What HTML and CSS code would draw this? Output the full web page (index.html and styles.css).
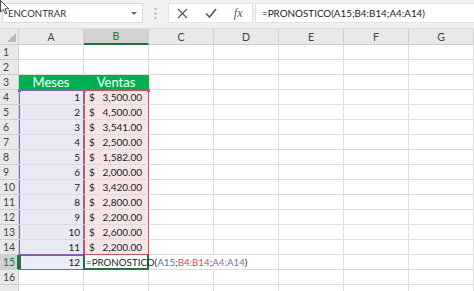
FILE: index.html
```html
<!DOCTYPE html>
<html lang="es">

<head>
    <meta charset="UTF-8">
    <title>PRONOSTICO</title>
    <link rel="stylesheet" href="styles.css">
</head>

<body>
    <div class="app">
        <!-- Barra de nombre y formula -->
        <div class="toolbar">
            <div class="namebox">
                <span>ENCONTRAR</span>
                <span class="caret"></span>
            </div>
            <div class="grip">
                <svg width="3" height="11" viewBox="0 0 3 11">
                    <rect x="0.5" y="0" width="2" height="2" fill="#b5b5b5" />
                    <rect x="0.5" y="4.5" width="2" height="2" fill="#b5b5b5" />
                    <rect x="0.5" y="9" width="2" height="2" fill="#b5b5b5" />
                </svg>
            </div>
            <div class="actions">
                <span class="action">
                    <svg width="11" height="11" viewBox="0 0 11 11">
                        <path d="M1 1 L10 10 M10 1 L1 10" stroke="#555" stroke-width="1.2" fill="none" />
                    </svg>
                </span>
                <span class="action">
                    <svg width="12" height="10" viewBox="0 0 12 10">
                        <path d="M1 5.5 L4.5 9 L11 1" stroke="#555" stroke-width="1.6" fill="none" />
                    </svg>
                </span>
                <span class="action fx">fx</span>
            </div>
            <div class="formula">=PRONOSTICO(A15;B4:B14;A4:A14)</div>
        </div>

        <!-- Hoja -->
        <div class="sheet" id="sheet"></div>

        <!-- Puntero del raton -->
        <svg class="cursor" width="10" height="15" viewBox="0 0 10 15">
            <path d="M0.5 0.5 L0.5 12 L3.3 9.4 L5.4 14 L7 13.3 L5 8.8 L8.8 8.8 Z" fill="#fff" stroke="#333" stroke-width="0.9" />
        </svg>
    </div>

    <script>
        const cols = ['A', 'B', 'C', 'D', 'E', 'F', 'G'];
        const ventas = [
            [1, '3,500.00'], [2, '4,500.00'], [3, '3,541.00'], [4, '2,500.00'],
            [5, '1,582.00'], [6, '2,000.00'], [7, '3,420.00'], [8, '2,800.00'],
            [9, '2,200.00'], [10, '2,600.00'], [11, '2,200.00']
        ];
        const sheet = document.getElementById('sheet');

        function addCell(className, html) {
            const cell = document.createElement('div');
            cell.className = className;
            if (html !== undefined) cell.innerHTML = html;
            sheet.appendChild(cell);
            return cell;
        }

        // Encabezados de columna
        addCell('corner', '<span class="corner-mark"></span>');
        cols.forEach(col => {
            addCell(col === 'B' ? 'col-head selected' : 'col-head', col);
        });

        // Filas (la 17 solo asoma por abajo, sin numero)
        for (let row = 1; row <= 17; row++) {
            addCell(row === 15 ? 'row-head selected' : 'row-head', row < 17 ? row : '');

            cols.forEach(col => {
                let cls = 'cell';
                let html = '';

                if (row === 3 && col === 'A') { cls += ' title'; html = 'Meses'; }
                if (row === 3 && col === 'B') { cls += ' title'; html = 'Ventas'; }

                if (row >= 4 && row <= 14) {
                    const [mes, venta] = ventas[row - 4];
                    const edge = row === 4 ? ' first' : row === 14 ? ' last' : '';
                    if (col === 'A') { cls += ' num range-a' + edge; html = mes; }
                    if (col === 'B') {
                        cls += ' money range-b' + edge;
                        html = '<span>$</span><span>' + venta + '</span>';
                    }
                }

                if (row === 15) {
                    if (col === 'A') { cls += ' num ref-a'; html = 12; }
                    if (col === 'B') {
                        cls += ' active';
                        html = '<span class="formula-text">=PRONOSTICO(<span class="c-blue">A15</span>;' +
                            '<span class="c-red">B4:B14</span>;' +
                            '<span class="c-purple">A4:A14</span>)</span>';
                    }
                    if (col === 'C') cls += ' no-grid';
                }

                addCell(cls, html);
            });
        }
    </script>
</body>

</html>
```

FILE: styles.css
```css
* {
    box-sizing: border-box;
}

body {
    margin: 0;
    background: #fff;
    font-family: 'Lato', 'Open Sans', sans-serif;
    color: #222;
    overflow: hidden;
}

.app {
    position: relative;
    width: 474px;
    height: 291px;
    overflow: hidden;
}

/* Barra superior */
.toolbar {
    display: flex;
    align-items: flex-start;
    height: 29px;
    padding: 3px 0 0 2px;
    background: #f1f1f1;
    border-bottom: 1px solid #dcdcdc;
}

.namebox {
    display: flex;
    align-items: center;
    justify-content: space-between;
    width: 141px;
    height: 20px;
    padding: 0 5px 0 5px;
    background: #fff;
    border: 1px solid #dadada;
    font-size: 9.6px;
    color: #333;
}

.caret {
    width: 0;
    height: 0;
    border-left: 3px solid transparent;
    border-right: 3px solid transparent;
    border-top: 3px solid #666;
}

.grip {
    display: flex;
    align-items: center;
    justify-content: center;
    width: 25px;
    height: 20px;
}

.actions {
    display: flex;
    align-items: center;
    width: 85px;
    height: 20px;
    background: #fff;
    border: 1px solid #e2e2e2;
}

.action {
    display: flex;
    align-items: center;
    justify-content: center;
    width: 28px;
    height: 18px;
}

.fx {
    font-family: 'Liberation Serif', serif;
    font-style: italic;
    font-size: 12px;
    color: #555;
}

.formula {
    flex: 1;
    height: 20px;
    margin-left: 2px;
    padding-left: 6px;
    background: #fff;
    border: 1px solid #e2e2e2;
    border-right: none;
    font-size: 9.85px;
    line-height: 18px;
    color: #222;
}

/* Hoja */
.sheet {
    display: grid;
    grid-template-columns: 19px repeat(7, 65px);
    grid-template-rows: 16px repeat(17, 15px);
}

.corner,
.col-head,
.row-head {
    background: #e9e9e9;
    color: #444;
    font-size: 10.5px;
    border-right: 1px solid #cfcfcf;
    border-bottom: 1px solid #cfcfcf;
}

.corner {
    position: relative;
}

.corner-mark {
    position: absolute;
    right: 2px;
    bottom: 2px;
    width: 0;
    height: 0;
    border-left: 9px solid transparent;
    border-bottom: 9px solid #b8b8b8;
}

.col-head {
    display: flex;
    align-items: center;
    justify-content: center;
}

.row-head {
    display: flex;
    align-items: center;
    padding-left: 3px;
}

.col-head.selected {
    background: #d2d2d2;
    color: #217346;
    border-bottom: 2px solid #217346;
}

.row-head.selected {
    background: #d2d2d2;
    color: #217346;
    border-right: 2px solid #217346;
}

.cell {
    position: relative;
    display: flex;
    align-items: center;
    padding: 0 3px;
    font-size: 10px;
    white-space: nowrap;
    border-right: 1px solid #dcdcdc;
    border-bottom: 1px solid #dcdcdc;
}

.title {
    justify-content: center;
    background: #00b050;
    border-color: #00b050;
    color: #fff;
    font-size: 13px;
}

.num {
    justify-content: flex-end;
}

.money {
    justify-content: space-between;
    padding: 0 6px 0 5px;
}

/* Rangos de referencia */
.range-a {
    background: #ebe8f5;
    border-right-color: #8466b3;
    box-shadow: inset 1px 0 #8466b3;
}

.range-b {
    background: #f6e5e6;
    border-right-color: #d0505c;
    box-shadow: inset 1px 0 #d0505c;
}

.range-a.first {
    box-shadow: inset 1px 0 #8466b3, inset 0 1px #8466b3;
}

.range-b.first {
    box-shadow: inset 1px 0 #d0505c, inset 0 1px #d0505c;
}

.range-a.last {
    border-bottom-color: #8466b3;
}

.range-b.last {
    border-bottom-color: #d0505c;
}

.range-a.first::before,
.range-b.first::before,
.range-b.first::after {
    content: '';
    position: absolute;
    top: -1px;
    left: -1px;
    width: 3px;
    height: 3px;
    background: #8466b3;
}

.range-b.first::after {
    left: auto;
    right: -2px;
    background: #d0505c;
}

.ref-a {
    background: #ebedf7;
    border-bottom-color: #5b6cc7;
    box-shadow: inset 2px 0 #217346, inset 0 1px #5b6cc7;
}

.active {
    overflow: visible;
    z-index: 1;
    padding-left: 2px;
}

.active::after {
    content: '';
    position: absolute;
    top: -1px;
    left: -1px;
    right: -1px;
    bottom: -1px;
    border: 2px solid #217346;
    border-top-color: #d0505c;
    border-top-width: 1px;
}

.formula-text {
    position: relative;
    z-index: 1;
    font-size: 9.75px;
}

.no-grid {
    border-right-color: transparent;
}

.c-blue {
    color: #4a6fc9;
}

.c-red {
    color: #cf4a52;
}

.c-purple {
    color: #8a67b8;
}

.cursor {
    position: absolute;
    top: 0;
    left: 0;
}
```
